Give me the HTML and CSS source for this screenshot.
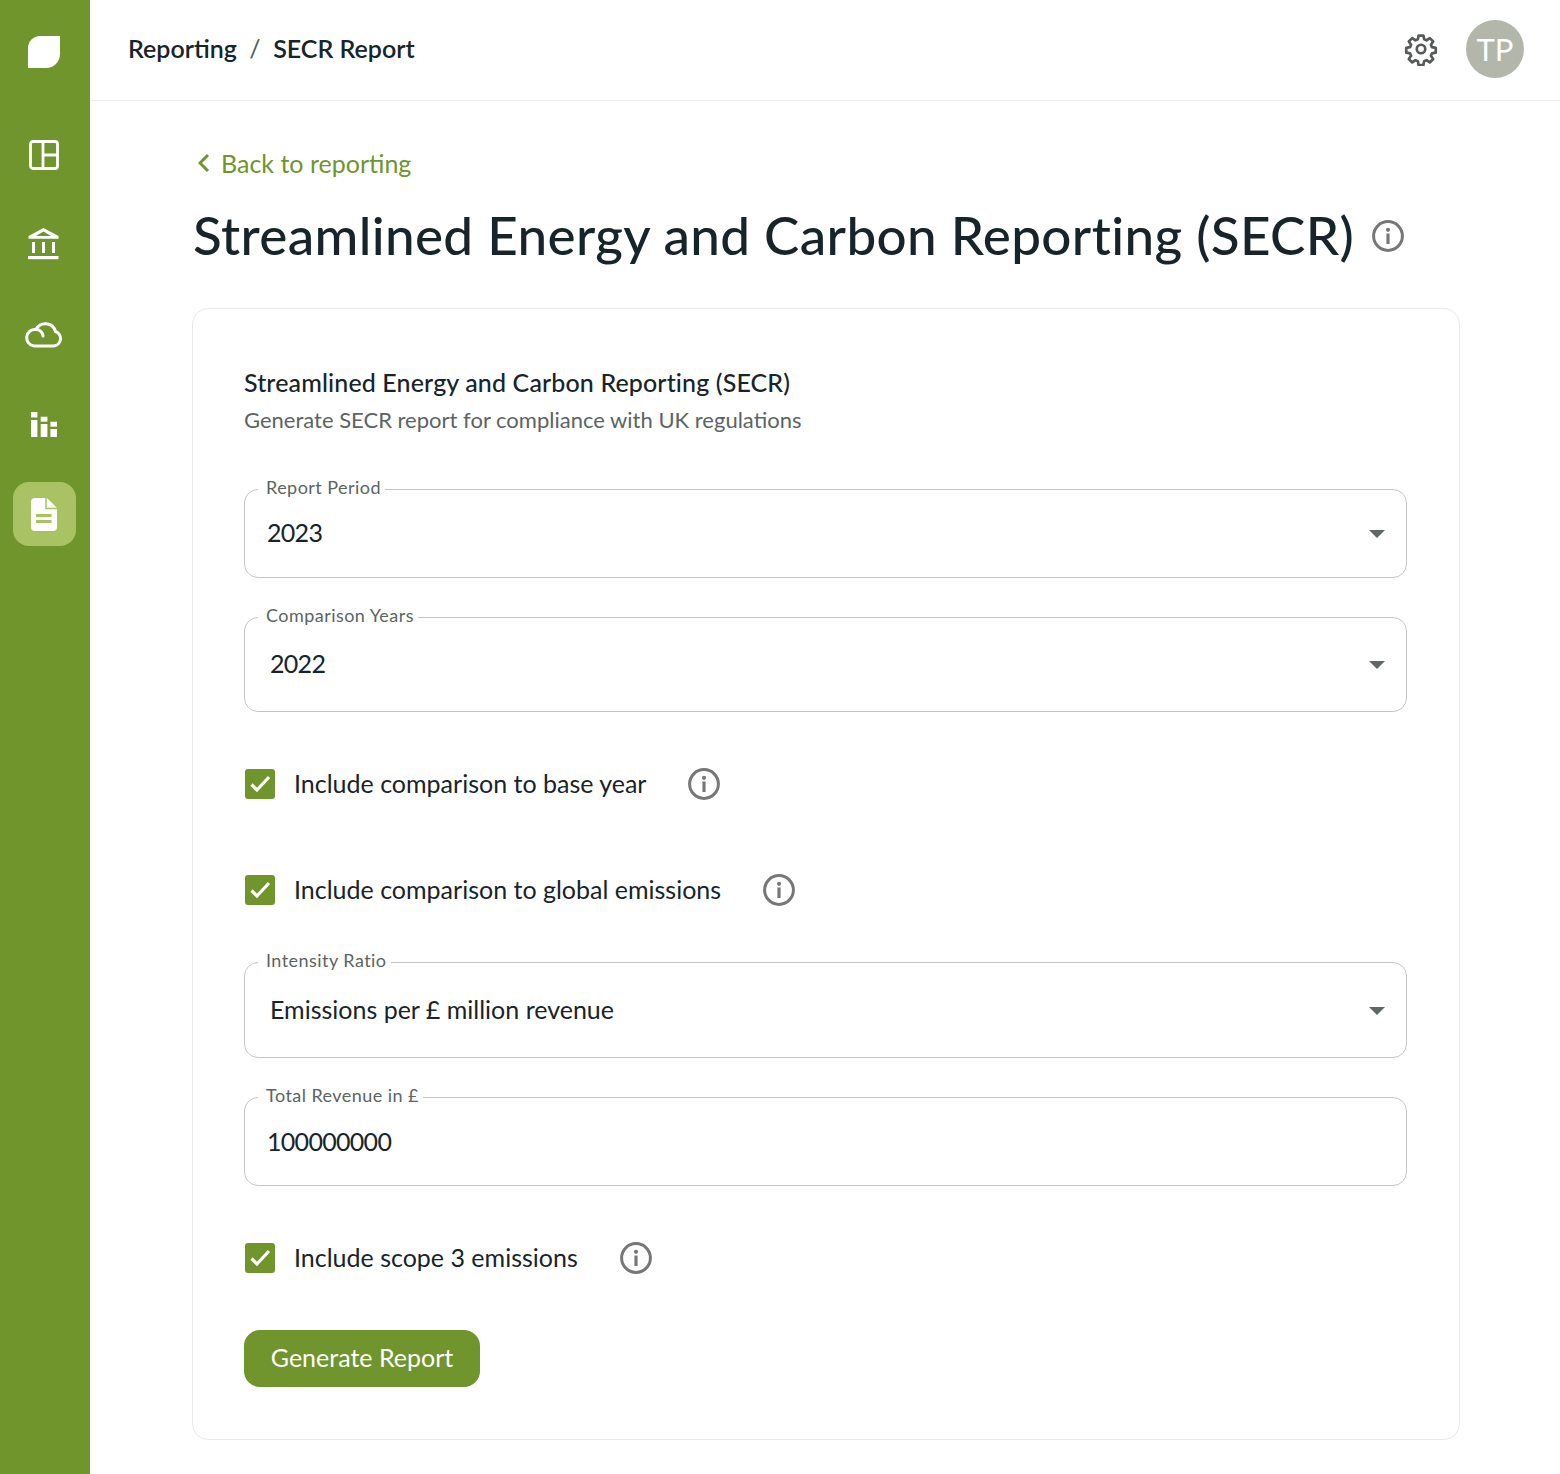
FILE: index.html
```html
<!DOCTYPE html>
<html lang="en">
<head>
  <meta charset="UTF-8">
  <title>SECR Report</title>
  <link rel="stylesheet" href="styles.css">
</head>
<body>
  <svg width="0" height="0" class="defs">
    <symbol id="info" viewBox="0 0 32 32">
      <circle cx="16" cy="16" r="14.4" fill="none" stroke="currentColor" stroke-width="3"/>
      <circle cx="16" cy="9.8" r="2.1" fill="currentColor"/>
      <rect x="14.4" y="13.5" width="3.2" height="10.5" fill="currentColor"/>
    </symbol>
    <symbol id="caret" viewBox="0 0 16 8">
      <path d="M0 0h16l-8 8z" fill="currentColor"/>
    </symbol>
    <symbol id="check" viewBox="0 0 30 30">
      <rect width="30" height="30" rx="3" fill="#6f952c"/>
      <path d="M6.500 15.500l5.500 5.500 12-13" fill="none" stroke="#fff" stroke-width="3.200"/>
    </symbol>
  </svg>
  <div class="app">
    <nav class="sidebar">
      <a class="logo">
        <svg width="32" height="32" viewBox="0 0 32 32"><path d="M12 0h20v18a14 14 0 0 1-14 14H0V12A12 12 0 0 1 12 0z" fill="#fff"/></svg>
      </a>
      <a class="nav-item nudge">
        <svg width="30" height="30" viewBox="0 0 30 30" fill="none" stroke="#fff" stroke-width="2.800"><rect x="1.500" y="1.500" width="27" height="27" rx="2.500"/><path d="M14 1.500v27M14 15h14.500"/></svg>
      </a>
      <a class="nav-item">
        <svg width="32" height="32" viewBox="0 0 32 32" fill="#fff"><path d="M15.500 0L30.500 8v2.800H.5V8zM15.500 3.400L8 8h15z" fill-rule="evenodd"/><rect x="4" y="14" width="3" height="11"/><rect x="14" y="14" width="3" height="11"/><rect x="24" y="14" width="3" height="11"/><rect x="0" y="28" width="30.500" height="3.200"/></svg>
      </a>
      <a class="nav-item nudge">
        <svg width="38" height="26" viewBox="0 0 38 26" fill="none" stroke="#fff" stroke-width="3" stroke-linecap="round"><path d="M9 24h20a7.500 7.500 0 0 0 1.500-14.500A10.500 10.500 0 0 0 11 7.500 8.300 8.300 0 0 0 9 24z"/><path d="M11 7.500a7 7 0 0 1 7 6.500"/></svg>
      </a>
      <a class="nav-item">
        <svg width="26" height="25" viewBox="0 0 26 25" fill="#fff"><rect y="0" width="6.400" height="5.500"/><rect y="8" width="6.400" height="17"/><rect x="9.700" y="4.700" width="6.700" height="5"/><rect x="9.700" y="12" width="6.700" height="13"/><rect x="19.400" y="9.700" width="6.600" height="5"/><rect x="19.400" y="17" width="6.600" height="8"/></svg>
      </a>
      <a class="nav-item active">
        <svg width="26" height="33" viewBox="0 0 26 33"><path d="M4 0h12l10 10v19a4 4 0 0 1-4 4H4a4 4 0 0 1-4-4V4a4 4 0 0 1 4-4z" fill="#fff"/><path d="M15 0v10.500H26" fill="none" stroke="#a9c263" stroke-width="1.500"/><path d="M5 16h15.500v3H5zM5 22h15.500v3H5z" fill="#a9c263"/></svg>
      </a>
    </nav>
    <div class="main">
      <header class="topbar">
        <div class="crumbs">
          <span>Reporting</span>
          <span class="sep">/</span>
          <span>SECR Report</span>
        </div>
        <div class="top-actions">
          <svg width="34" height="34" viewBox="0 0 24 24" fill="none" stroke="#555c58" stroke-width="1.900" stroke-linejoin="round"><path d="M10.300 2.500h3.400l.5 2.700 1.700.7 2.300-1.600 2.400 2.400-1.600 2.300.7 1.700 2.700.5v3.400l-2.700.5-.7 1.700 1.600 2.300-2.400 2.400-2.300-1.600-1.700.7-.5 2.700h-3.400l-.5-2.700-1.700-.7-2.300 1.600-2.400-2.400 1.600-2.300-.7-1.700-2.700-.5v-3.400l2.700-.5.7-1.700-1.600-2.300 2.400-2.400 2.300 1.600 1.700-.7z"/><circle cx="12" cy="12" r="3"/></svg>
          <div class="avatar">TP</div>
        </div>
      </header>
      <main class="content">
        <a class="back">
          <svg width="12" height="20" viewBox="0 0 12 20" fill="none" stroke="#6f952c" stroke-width="3"><path d="M10 2l-8 8 8 8"/></svg>
          Back to reporting
        </a>
        <div class="title-row">
          <h1>Streamlined Energy and Carbon Reporting (SECR)</h1>
          <svg class="info-title"><use href="#info"/></svg>
        </div>
        <section class="card">
          <h2>Streamlined Energy and Carbon Reporting (SECR)</h2>
          <p class="sub">Generate SECR report for compliance with UK regulations</p>

          <fieldset class="field first">
            <legend>Report Period</legend>
            <span class="value num">2023</span>
            <svg class="caret"><use href="#caret"/></svg>
          </fieldset>

          <fieldset class="field tall">
            <legend>Comparison Years</legend>
            <span class="value num inset">2022</span>
            <svg class="caret"><use href="#caret"/></svg>
          </fieldset>

          <div class="check-row row-a">
            <svg class="check"><use href="#check"/></svg>
            <span>Include comparison to base year</span>
            <svg class="info"><use href="#info"/></svg>
          </div>
          <div class="check-row row-b">
            <svg class="check"><use href="#check"/></svg>
            <span>Include comparison to global emissions</span>
            <svg class="info"><use href="#info"/></svg>
          </div>

          <fieldset class="field tall after-check">
            <legend>Intensity Ratio</legend>
            <span class="value inset">Emissions per £ million revenue</span>
            <svg class="caret"><use href="#caret"/></svg>
          </fieldset>

          <fieldset class="field revenue">
            <legend>Total Revenue in £</legend>
            <span class="value num">100000000</span>
          </fieldset>

          <div class="check-row row-c">
            <svg class="check"><use href="#check"/></svg>
            <span>Include scope 3 emissions</span>
            <svg class="info"><use href="#info"/></svg>
          </div>

          <button class="generate">Generate Report</button>
        </section>
      </main>
    </div>
  </div>
</body>
</html>
```

FILE: styles.css
```css
* {
  box-sizing: border-box;
}
body {
  margin: 0;
  background: #fff;
  color: #17242a;
  font-family: "Lato", "Noto Sans", sans-serif;
}
.defs {
  position: absolute;
}
.app {
  display: flex;
  min-height: 1474px;
}
.sidebar {
  width: 90px;
  flex: none;
  background: #6f952c;
  display: flex;
  flex-direction: column;
  align-items: center;
  padding: 20px 2px 0 0;
}
.logo {
  height: 62px;
  display: flex;
  align-items: flex-start;
  padding-top: 16px;
  margin-bottom: 40px;
}
.nav-item {
  width: 63px;
  height: 64px;
  border-radius: 16px;
  margin-bottom: 26px;
  display: flex;
  align-items: center;
  justify-content: center;
}
.nav-item.nudge svg {
  margin-top: 2px;
}
.nav-item.active {
  background: #a9c263;
}
.main {
  flex: 1;
  min-width: 0;
}
.topbar {
  height: 101px;
  border-bottom: 1px solid #eceeed;
  display: flex;
  align-items: center;
  justify-content: space-between;
  padding: 0 36px 2px 38px;
}
.crumbs {
  display: flex;
  gap: 12.5px;
  font-size: 25px;
  font-weight: 600;
  margin-top: -2px;
}
.crumbs .sep {
  color: #555c58;
  font-weight: 400;
}
.top-actions {
  display: flex;
  align-items: center;
  gap: 28px;
}
.avatar {
  width: 58px;
  height: 58px;
  border-radius: 50%;
  background: #b2b6ab;
  color: #fff;
  font-size: 31px;
  display: flex;
  align-items: center;
  justify-content: center;
}
.content {
  padding: 46px 100px 34px 102px;
}
.back {
  display: flex;
  align-items: center;
  gap: 11px;
  color: #6f952c;
  font-size: 25px;
  height: 32px;
  padding-left: 6px;
}
.title-row {
  display: flex;
  align-items: center;
  gap: 18px;
  margin-top: 23px;
  height: 64px;
  padding-left: 1px;
}
h1 {
  margin: 0;
  font-size: 53px;
  font-weight: 500;
  letter-spacing: 0.35px;
  white-space: nowrap;
}
.info-title {
  width: 32px;
  height: 32px;
  margin-top: 4px;
  color: #777;
}
.card {
  margin-top: 42px;
  border: 1px solid #e8e9e8;
  border-radius: 16px;
  padding: 57px 52px 52px 51px;
}
h2 {
  margin: 0;
  font-size: 25px;
  font-weight: 500;
  letter-spacing: 0.13px;
  line-height: 32px;
}
.sub {
  margin: 7px 0 0;
  font-size: 22px;
  line-height: 30px;
  color: #5c6462;
}
.field {
  position: relative;
  margin: 0;
  border: 1px solid #c4c6c4;
  border-radius: 14px;
  padding: 0 22px;
  height: 99px;
  display: flex;
  align-items: center;
  min-width: 0;
}
.field legend {
  margin-left: -9px;
  padding: 0 4px 0 8px;
  font-size: 18px;
  letter-spacing: 0.45px;
  line-height: 16px;
  color: #5c6462;
  height: 20px;
}
.field.first {
  margin-top: 44px;
}
.field.tall {
  height: 105px;
  margin-top: 29px;
}
.field.after-check {
  height: 106px;
  margin-top: 46px;
}
.field.revenue {
  margin-top: 29px;
}
.value {
  font-size: 25px;
  color: #17242a;
  margin-bottom: 12px;
}
.revenue .value {
  margin-bottom: 10px;
}
.value.num {
  letter-spacing: -0.7px;
}
.value.inset {
  padding-left: 3px;
}
.caret {
  position: absolute;
  right: 21px;
  top: 31px;
  width: 16px;
  height: 8px;
  color: #5f6664;
}
.tall .caret {
  top: 34px;
}
.after-check .caret {
  top: 35px;
}
.check-row {
  display: flex;
  align-items: center;
  font-size: 25px;
  height: 32px;
  padding-left: 1px;
}
.check-row span {
  padding-bottom: 2px;
}
.check-row.row-a {
  margin-top: 56px;
}
.check-row.row-b {
  margin-top: 74px;
}
.check-row.row-c {
  margin-top: 56px;
}
.check {
  width: 30px;
  height: 30px;
  margin-right: 19px;
}
.info {
  width: 32px;
  height: 32px;
  margin-left: 42px;
  color: #777;
}
.generate {
  margin-top: 56px;
  display: block;
  width: 236px;
  height: 57px;
  background: #6f952c;
  color: #fff;
  border: 0;
  border-radius: 16px;
  padding: 0 0 4px;
  font-family: inherit;
  font-size: 25px;
}
```
